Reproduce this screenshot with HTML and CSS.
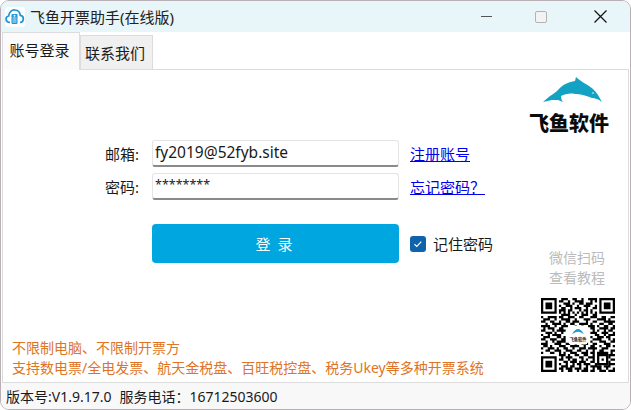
FILE: index.html
```html
<!DOCTYPE html>
<html lang="zh-CN">
<head>
    <meta charset="UTF-8">
    <title>飞鱼开票助手(在线版)</title>
    <link rel="stylesheet" href="styles.css">
</head>
<body>

<div class="window">
    <div class="titlebar">
        <svg class="app-icon" viewBox="0 0 20 20">
            <rect width="20" height="20" rx="3" fill="#fff"/>
            <path d="M5 15.500c-5 0-5-6-1.300-6.500C4 5 7 2.600 10 3c3 .3 5 2.500 5.300 5.300 4.200.5 4 7.200-.3 7.200" fill="none" stroke="#1c95d8" stroke-width="1.700"/>
            <rect x="6.500" y="7" width="6" height="10" rx="1" fill="#1c95d8"/>
            <path d="M7.500 11h4M7.500 13h4M7.500 15h4" stroke="#fff" stroke-width=".8"/>
            <circle cx="9.500" cy="8.800" r="1" fill="#fff"/>
        </svg>
        <span class="app-title">飞鱼开票助手(在线版)</span>
        <div class="win-buttons">
            <span class="win-min"></span>
            <span class="win-max"></span>
            <svg class="win-close" viewBox="0 0 13 13"><path d="M.5.500l12 12M12.500.500l-12 12" stroke="#111" stroke-width="1.200"/></svg>
        </div>
    </div>

    <div class="tabs">
        <div class="tab tab-active">账号登录</div>
        <div class="tab">联系我们</div>
    </div>

    <div class="panel">
        <div class="main">
            <div class="login-form">
                <label class="field-label">邮箱:</label>
                <div class="input">fy2019@52fyb.site</div>
                <a class="link" href="#">注册账号</a>

                <label class="field-label">密码:</label>
                <div class="input input-pass">********</div>
                <a class="link" href="#">忘记密码？</a>

                <button class="login-btn">登 录</button>
                <div class="remember">
                    <span class="checkbox">
                        <svg viewBox="0 0 16 16"><path d="M4.500 8.300l2.300 2.200 4.500-4.800" fill="none" stroke="#fff" stroke-width="1.200"/></svg>
                    </span>
                    记住密码
                </div>
            </div>

            <div class="notes">
                <div>不限制电脑、不限制开票方</div>
                <div>支持数电票/全电发票、航天金税盘、百旺税控盘、税务Ukey等多种开票系统</div>
            </div>
        </div>

        <div class="side">
            <div class="logo">
                <svg class="dolphin" viewBox="0 0 60 26">
                    <path d="M0 25C6 19 11 17 15 13 20 7 26 5 32 4L33 0C35 2 38 4 41 6 47 9 52 13 55 18L59 25C55 22 52 21 49 21 44 19 38 17 32 17 27 16 22 17 18 19 18 22 19 24 20 25L15 23 9 23Z" fill="#13a2c4"/>
                    <circle cx="50" cy="16" r=".8" fill="#fff"/>
                </svg>
                <div class="logo-text">飞鱼软件</div>
            </div>
            <div class="qr-tip">微信扫码<br>查看教程</div>
            <svg class="qr" viewBox="0 0 33 33">
                <path d="M0 0h7v7H0zM1 1v5h5V1zM26 0h7v7h-7zM27 1v5h5V1zM0 26h7v7H0zM1 27v5h5v-5z" fill="#000" fill-rule="evenodd"/>
                <path d="M2 2h3v3H2zM28 2h3v3h-3zM2 28h3v3H2zM25 25h5v5h-5z" fill="#000"/>
                <path d="M26 26h3v3h-3z" fill="#fff"/>
                <path d="M27 27h1v1h-1z" fill="#000"/>
                <path stroke="#000" fill="none" d="M9 .5h3M14 .5h2M18 .5h1M21 .5h4
                    M8 1.500h2M12 1.500h1M15 1.500h4M22 1.500h1M24 1.500h1
                    M10 2.500h3M14 2.500h1M17 2.500h2M20 2.500h3
                    M8 3.500h1M11 3.500h3M16 3.500h1M19 3.500h3M24 3.500h1
                    M9 4.500h2M13 4.500h1M15 4.500h3M20 4.500h1M23 4.500h2
                    M8 5.500h3M12 5.500h2M17 5.500h1M19 5.500h2M22 5.500h1
                    M8 6.500h1M10 6.500h1M12 6.500h1M14 6.500h1M16 6.500h1M18 6.500h1M20 6.500h1M22 6.500h1M24 6.500h1
                    M9 7.500h4M15 7.500h1M18 7.500h3M23 7.500h2
                    M0 8.500h1M3 8.500h4M8 8.500h2M12 8.500h3M17 8.500h2M22 8.500h3M27 8.500h2M31 8.500h2
                    M1 9.500h3M6 9.500h1M9 9.500h4M15 9.500h1M19 9.500h3M25 9.500h4M30 9.500h1
                    M0 10.500h2M4 10.500h2M8 10.500h1M11 10.500h2M14 10.500h3M20 10.500h1M23 10.500h2M28 10.500h5
                    M2 11.500h1M5 11.500h4M10 11.500h1M13 11.500h2M17 11.500h4M22 11.500h1M26 11.500h2M30 11.500h2
                    M0 12.500h4M6 12.500h1M9 12.500h3M15 12.500h1M18 12.500h1M21 12.500h3M25 12.500h1M28 12.500h2M32 12.500h1
                    M1 13.500h1M3 13.500h3M8 13.500h2M22 13.500h2M26 13.500h4M31 13.500h2
                    M0 14.500h2M5 14.500h1M7 14.500h4M23 14.500h1M25 14.500h1M28 14.500h1M30 14.500h2
                    M2 15.500h3M6 15.500h1M9 15.500h1M22 15.500h3M27 15.500h3M32 15.500h1
                    M0 16.500h1M3 16.500h1M5 16.500h4M24 16.500h2M28 16.500h1M30 16.500h3
                    M1 17.500h3M7 17.500h2M10 17.500h1M22 17.500h1M25 17.500h3M29 17.500h2
                    M0 18.500h2M4 18.500h3M9 18.500h2M23 18.500h4M30 18.500h1M32 18.500h1
                    M2 19.500h1M5 19.500h1M7 19.500h4M22 19.500h1M26 19.500h3M31 19.500h2
                    M0 20.500h3M6 20.500h3M11 20.500h2M15 20.500h1M18 20.500h3M23 20.500h2M28 20.500h3
                    M1 21.500h2M4 21.500h1M8 21.500h3M13 21.500h4M19 21.500h1M22 21.500h2M26 21.500h1M29 21.500h2M32 21.500h1
                    M0 22.500h1M3 22.500h3M7 22.500h1M10 22.500h2M14 22.500h1M17 22.500h3M21 22.500h4M27 22.500h3
                    M2 23.500h2M6 23.500h3M11 23.500h3M16 23.500h2M20 23.500h1M23 23.500h1M26 23.500h2M31 23.500h2
                    M0 24.500h1M4 24.500h2M8 24.500h1M10 24.500h1M13 24.500h3M18 24.500h3M22 24.500h2M25 24.500h5M31 24.500h1
                    M8 25.500h3M12 25.500h1M15 25.500h2M19 25.500h2M23 25.500h1M30 25.500h3
                    M9 26.500h1M11 26.500h3M17 26.500h2M21 26.500h3M30 26.500h1
                    M8 27.500h2M12 27.500h1M14 27.500h2M18 27.500h1M20 27.500h1M23 27.500h1M31 27.500h2
                    M10 28.500h2M13 28.500h3M17 28.500h3M22 28.500h2M30 28.500h1
                    M8 29.500h1M11 29.500h1M14 29.500h1M16 29.500h2M19 29.500h3M24 29.500h1M30 29.500h3
                    M9 30.500h3M13 30.500h2M17 30.500h1M20 30.500h1M22 30.500h5M28 30.500h3
                    M8 31.500h2M11 31.500h3M15 31.500h3M19 31.500h2M23 31.500h1M25 31.500h2M29 31.500h1M32 31.500h1
                    M9 32.500h1M12 32.500h2M16 32.500h1M18 32.500h3M22 32.500h2M26 32.500h3M30 32.500h3"/>
                <rect x="12.300" y="12.300" width="8.400" height="8.400" rx="1" fill="#fff"/>
                <path d="M13.800 16.200c1-1.800 1.900-2.400 2.700-2.400s1.700.6 2.700 2.400c-1-.8-1.800-1.200-2.700-1.200s-1.700.4-2.700 1.200z" fill="#1a9ecb"/>
                <text class="qr-text" x="16.500" y="19.200" text-anchor="middle">飞鱼软件</text>
            </svg>
        </div>
    </div>

    <div class="statusbar">
        <span>版本号:V1.9.17.0</span>
        <span>服务电话：16712503600</span>
    </div>
</div>

</body>
</html>
```

FILE: styles.css
```css
* {
    box-sizing: border-box;
}

html, body {
    margin: 0;
    padding: 0;
    height: 100%;
    background-color: #fff;
}

body {
    font-family: "Noto Sans", "Noto Sans CJK SC", sans-serif;
    font-size: 14px;
    color: #1a1a1a;
    overflow: hidden;
}

.window {
    display: flex;
    flex-direction: column;
    width: 631px;
    height: 410px;
    background-color: #fff;
    border: 1px solid #b9b0b6;
    border-radius: 9px;
    overflow: hidden;
}

.titlebar {
    display: flex;
    align-items: center;
    height: 31px;
    flex: none;
    padding-left: 4px;
    background-color: #e8f5f9;
}

.app-icon {
    width: 20px;
    height: 20px;
}

.app-title {
    margin-left: 5px;
    font-size: 15px;
    color: #222;
}

.win-buttons {
    display: flex;
    align-items: center;
    margin-left: auto;
    padding-right: 23px;
}

.win-min {
    width: 11px;
    height: 1px;
    background-color: #555;
}

.win-max {
    width: 12px;
    height: 12px;
    margin-left: 43px;
    background-color: #f3f3f5;
    border: 1px solid #b3b3b3;
    border-radius: 2px;
}

.win-close {
    width: 13px;
    height: 13px;
    margin-left: 47px;
}

.tabs {
    display: flex;
    align-items: flex-end;
    height: 38px;
    flex: none;
    padding-left: 1px;
    margin-bottom: -1px;
}

.tab {
    display: flex;
    align-items: center;
    justify-content: center;
    width: 73px;
    height: 35px;
    padding-right: 3px;
    padding-bottom: 2px;
    background-color: #f0f0f0;
    border: 1px solid #dcdcdc;
    border-bottom: none;
    font-size: 15px;
    color: #1a1a1a;
}

.tab-active {
    position: relative;
    z-index: 1;
    width: 78px;
    height: 38px;
    padding-bottom: 4px;
    background-color: #fbfbfb;
    border-right: 1px solid #dcdcdc;
}

.panel {
    display: flex;
    flex: 1;
    margin: 0 1px;
    background-color: #fff;
    border: 1px solid #dcdcdc;
}

.main {
    display: flex;
    flex-direction: column;
    flex: 1;
}

.login-form {
    display: grid;
    grid-template-columns: 139px 247px auto;
    grid-template-rows: 27px 27px 57px;
    column-gap: 10px;
    row-gap: 6px;
    align-items: center;
    margin-top: 70px;
}

.field-label {
    font-size: 15px;
    text-align: right;
    padding-right: 3px;
}

.input {
    height: 27px;
    padding-left: 2px;
    background-color: #fff;
    border: 1px solid #e4e4e4;
    border-bottom: 2px solid #8a8a8a;
    border-radius: 3px;
    font-size: 15.500px;
    line-height: 23px;
    color: #1a1a1a;
}

.input-pass {
    font-size: 12.500px;
    line-height: 22px;
}

.link {
    margin-left: 1px;
    font-size: 15px;
    color: #0000ee;
    text-decoration: underline;
}

.login-btn {
    grid-column: 2;
    grid-row: 3;
    align-self: end;
    height: 39px;
    padding: 0 3px 0 0;
    background-color: #00a6e0;
    border: none;
    border-radius: 4px;
    font-family: inherit;
    font-size: 15px;
    color: #fff;
    word-spacing: 3px;
}

.remember {
    grid-column: 3;
    grid-row: 3;
    align-self: end;
    display: flex;
    align-items: center;
    gap: 7px;
    height: 39px;
    margin-left: 1px;
    font-size: 15px;
}

.checkbox {
    display: block;
    width: 16px;
    height: 16px;
    background-color: #0f62ac;
    border-radius: 3px;
}

.checkbox svg {
    display: block;
}

.notes {
    margin-top: auto;
    padding-left: 9px;
    padding-bottom: 4px;
    color: #dd7426;
    line-height: 20px;
    white-space: nowrap;
}

.side {
    display: flex;
    flex-direction: column;
    align-items: flex-start;
    width: 100px;
    flex: none;
}

.logo {
    display: flex;
    flex-direction: column;
    align-items: center;
    margin-top: 7px;
    margin-left: 1px;
}

.dolphin {
    display: block;
    width: 60px;
    height: 26px;
    margin-left: 8px;
}

.logo-text {
    margin-top: 6px;
    font-family: "Noto Sans CJK SC", sans-serif;
    font-size: 20px;
    font-weight: 900;
    line-height: 27px;
    color: #0b0b0b;
}

.qr-tip {
    margin-top: 112px;
    margin-left: 21px;
    color: #bbb;
    line-height: 20px;
    text-align: center;
}

.qr {
    display: block;
    width: 74px;
    height: 74px;
    margin-top: 10px;
    margin-left: 13px;
}

.qr-text {
    font-family: "Noto Sans CJK SC", sans-serif;
    font-size: 1.900px;
    font-weight: 700;
    fill: #222;
}

.statusbar {
    display: flex;
    align-items: center;
    gap: 8px;
    height: 26px;
    flex: none;
    padding-left: 5px;
    background-color: #f8f8f9;
    color: #1a1a1a;
}
```
